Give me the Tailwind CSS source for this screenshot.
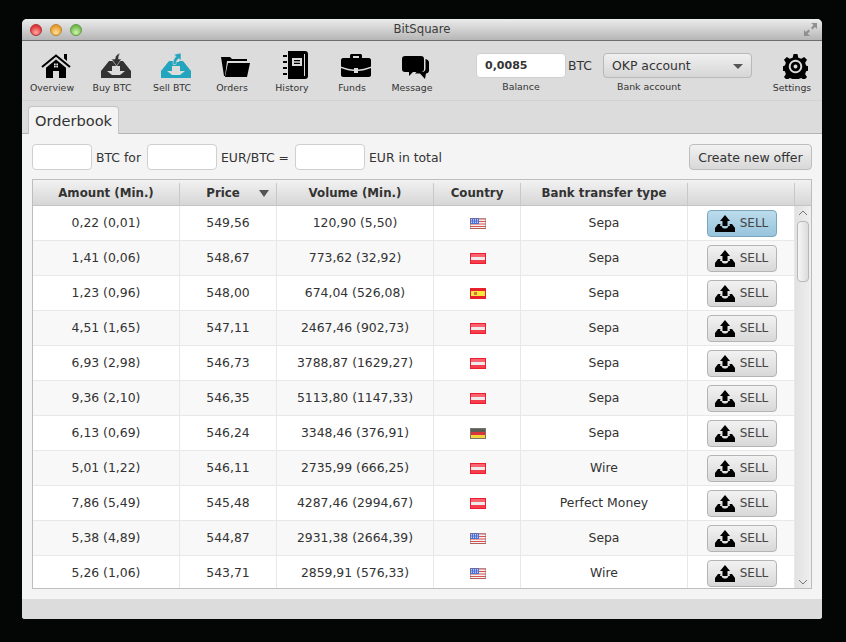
<!DOCTYPE html>
<html lang="en">
<head>
<meta charset="UTF-8">
<title>BitSquare</title>
<script src="https://cdn.jsdelivr.net/npm/@tailwindcss/browser@4"></script>
</head>
<body class="bg-[#040605] h-[642px] overflow-hidden font-['DejaVu_Sans',sans-serif] text-[12.4px] text-[#333]">

<svg class="hidden">
  <symbol id="tray-up" viewBox="0 0 20 17">
    <path d="M10 0l5 6h-2.500v5h-5V6H5z"/>
    <path d="M3 9h2.500L5 11h1.500c.5 2 2 2.500 3.500 2.500s3-.5 3.500-2.500H15l-.5-2H17l3 4v4H0v-4z"/>
  </symbol>
  <symbol id="tray-body" viewBox="0 0 30 25">
    <path fill-rule="evenodd" d="M8 8h4v1h6V8h4l8 10v7H0v-7zM6 18h5v-5h8v5h5l-5 4h-8z"/>
  </symbol>
  <symbol id="flag-us" viewBox="0 0 16 11">
    <rect width="16" height="11" fill="#f4f1f1"/>
    <path d="M0 1h16M0 3.500h16M0 6h16M0 8.500h16M0 10.500h16" stroke="#d9534f" stroke-width="1"/>
    <rect width="9" height="6" fill="#4a6fd8"/>
    <path d="M1 1.500h7M1 3h7M1 4.500h7" stroke="#dfe7fb" stroke-width=".8" stroke-dasharray="1 1"/>
    <rect x=".5" y=".5" width="15" height="10" fill="none" stroke="#8a6a6a" stroke-opacity=".5"/>
  </symbol>
  <symbol id="flag-at" viewBox="0 0 16 11">
    <rect width="16" height="11" fill="#ee1c2e"/>
    <rect x="1" y="1" width="14" height="3" fill="#f9626f"/>
    <rect x="1" y="4" width="14" height="3" fill="#f0ecec"/>
    <rect x="1" y="7" width="14" height="3" fill="#f43e4e"/>
  </symbol>
  <symbol id="flag-es" viewBox="0 0 16 11">
    <rect width="16" height="11" fill="#e8202c"/>
    <rect x="1" y="3" width="14" height="5" fill="#f6e83c"/>
    <rect x="4" y="4" width="3" height="3" fill="#d8703c"/>
  </symbol>
  <symbol id="flag-de" viewBox="0 0 16 11">
    <rect width="16" height="11" fill="#77756a"/>
    <rect x="1" y="1" width="14" height="3" fill="#5c5c58"/>
    <rect x="1" y="4" width="14" height="3" fill="#d8343a"/>
    <rect x="1" y="7" width="14" height="3" fill="#f4d43c"/>
  </symbol>
</svg>

<div class="ml-[22px] mt-[19px] w-[800px] h-[600px] rounded-t-[5px] rounded-b-[3px] overflow-hidden bg-[#dcdcdc] flex flex-col">

  <!-- title bar -->
  <div class="relative h-[22px] shrink-0 flex items-center pl-[8px] gap-[8px] border-b border-[#6e6e6e] bg-gradient-to-b from-[#ececec] to-[#b6b6b6]">
    <span class="w-[12px] h-[12px] rounded-full border border-[#a33] bg-[radial-gradient(circle_at_50%_75%,#ffa8a0,#e0363a_70%)]"></span>
    <span class="w-[12px] h-[12px] rounded-full border border-[#b8862c] bg-[radial-gradient(circle_at_50%_75%,#ffe09a,#e8992e_70%)]"></span>
    <span class="w-[12px] h-[12px] rounded-full border border-[#5f9a45] bg-[radial-gradient(circle_at_50%_75%,#d0f5a8,#72b950_70%)]"></span>
    <span class="flex-1 text-center text-[11.7px] text-[#3a3a3a] pr-[68px]">BitSquare</span>
    <svg class="absolute right-[4px] top-[3px]" width="15" height="15" viewBox="0 0 15 15" fill="#8f8f8f">
      <path d="M8 1h6v6l-2-2-2.500 2.500-1.500-1.500L10.500 3zM7 14H1V8l2 2 2.500-2.500L7 9l-2.500 2.500z"/>
    </svg>
  </div>

  <!-- toolbar -->
  <div class="h-[60px] shrink-0 flex items-start bg-[#dcdcdc] border-b border-[#d2d2d2] text-[9.4px]">
    <div class="w-[60px] flex flex-col items-center">
      <div class="h-[39px] flex items-end">
        <svg class="ml-[7px] mb-[2px] h-[25px] w-[30px]" viewBox="0 0 30 25">
          <path d="M1 14L15 2.500 29 14" fill="none" stroke="#000" stroke-width="2"/>
          <path d="M23 1h3v7l-3-2.500z"/>
          <path fill-rule="evenodd" d="M15 6.500l10 8.300V25h-7v-7h-6v7H5V14.800zM13 10.500v1.700h1.700v-1.700zM15.300 10.500v1.700H17v-1.700zM13 12.800v1.700h1.700v-1.700zM15.300 12.800v1.700H17v-1.700z"/>
        </svg>
      </div>
      <span class="mt-[1px]">Overview</span>
    </div>
    <div class="w-[60px] flex flex-col items-center">
      <div class="h-[39px] flex items-end">
        <svg class="ml-[7px] mb-[2px] h-[25px] w-[30px]" viewBox="0 0 30 25" fill="#333">
          <use href="#tray-body"/>
          <path d="M19 0c-3 1-5 3-5 6H10.500l5 7 5-7H17.500c0-2 .5-4 1.500-6z" stroke="#dcdcdc" stroke-width=".6"/>
        </svg>
      </div>
      <span class="mt-[1px]">Buy BTC</span>
    </div>
    <div class="w-[60px] flex flex-col items-center">
      <div class="h-[39px] flex items-end">
        <svg class="ml-[7px] mb-[2px] h-[25px] w-[30px]" viewBox="0 0 30 25" fill="#22a5bd">
          <use href="#tray-body"/>
          <path d="M20 0l-7 1.500 2 2c-2 2-3 4-3 8h3c0-3 1-5 3-6l2 2z" stroke="#dcdcdc" stroke-width=".6"/>
        </svg>
      </div>
      <span class="mt-[1px]">Sell BTC</span>
    </div>
    <div class="w-[60px] flex flex-col items-center">
      <div class="h-[39px] flex items-end">
        <svg class="ml-[7px] mb-[3px] h-[20px] w-[29px]" viewBox="0 0 29 20">
          <path d="M0 0h9l2 2h15v2H6L4 19H3z"/>
          <path d="M7 6h22l-3 14H4z"/>
        </svg>
      </div>
      <span class="mt-[1px]">Orders</span>
    </div>
    <div class="w-[60px] flex flex-col items-center">
      <div class="h-[39px] flex items-end">
        <svg class="ml-[7px] mb-[1px] h-[28px] w-[25px]" viewBox="0 0 25 28">
          <path fill-rule="evenodd" d="M5 0h17c2 0 3 1 3 3v22c0 2-1 3-3 3H5zM9 7v8h10V7zM11 9h6v1.300h-6zM11 11.700h6V13h-6zM21 3v22h1V3z"/>
          <path d="M0 4h4v2H0zM0 10h4v2H0zM0 16h4v2H0zM0 22h4v2H0z"/>
        </svg>
      </div>
      <span class="mt-[1px]">History</span>
    </div>
    <div class="w-[60px] flex flex-col items-center">
      <div class="h-[39px] flex items-end">
        <svg class="ml-[7px] mb-[3px] h-[23px] w-[30px]" viewBox="0 0 30 23">
          <path fill-rule="evenodd" d="M10 0h10l1 1v3h7c1 0 2 1 2 2v6.500c-5 2-10 3-13 3V14h-4v1.500c-3 0-8-1-13-3V6c0-1 1-2 2-2h7V1zM12 2v2h6V2z"/>
          <path d="M0 14c5 2 9 3 13 3v2h4v-2c4 0 8-1 13-3v7c0 1-1 2-2 2H2c-1 0-2-1-2-2z"/>
        </svg>
      </div>
      <span class="mt-[1px]">Funds</span>
    </div>
    <div class="w-[60px] flex flex-col items-center">
      <div class="h-[39px] flex items-end">
        <svg class="ml-[7px] mb-[1px] h-[23px] w-[27px]" viewBox="0 0 27 23">
          <path d="M3 0h16c2 0 3 1 3 3v10c0 2-1 3-3 3h-8l-4 4v-4H3c-2 0-3-1-3-3V3c0-2 1-3 3-3z"/>
          <path d="M23.500 3c2 .5 3.500 1.500 3.500 3.500v8c0 2-1.500 3-3 3l-1 5.500-5-5.500h-5l1.500-1.500H20c2.500 0 3.500-1.500 3.500-3.500z"/>
        </svg>
      </div>
      <span class="mt-[1px]">Message</span>
    </div>

    <div class="ml-[34px] w-[116px] flex flex-col pt-[12px]">
      <div class="flex items-center gap-[2px]">
        <div class="w-[90px] h-[25px] bg-white rounded-[4px] border border-[#d0d0d0] pl-[8px] pt-[1px] flex items-center font-bold text-[11px] text-[#333]">0,0085</div>
        <span class="text-[12.4px] pt-[2px]">BTC</span>
      </div>
      <span class="mt-[2px] w-[90px] text-center">Balance</span>
    </div>
    <div class="ml-[11px] w-[149px] flex flex-col pt-[12px]">
      <div class="h-[25px] rounded-[4px] border border-[#b8b8b8] bg-gradient-to-b from-[#f0f0f0] to-[#d6d6d6] pl-[8px] pr-[8px] pt-[2px] flex items-center justify-between text-[12.4px]">
        <span>OKP account</span>
        <span class="w-0 h-0 border-l-[5px] border-r-[5px] border-t-[5px] border-l-transparent border-r-transparent border-t-[#555]"></span>
      </div>
      <span class="mt-[2px] pl-[14px]">Bank account</span>
    </div>
    <div class="ml-[10px] w-[60px] flex flex-col items-center">
      <div class="h-[39px] flex items-end">
        <svg class="ml-[7px] mb-[1px] h-[25px] w-[25px]" viewBox="0 0 26 26">
          <path fill-rule="evenodd" d="M11 0h4l1 4 3 1 3-2 3 3-2 3 1 3 3 1v4l-3 1-1 3 2 3-3 3-3-2-3 1-1 3h-4l-1-3-3-1-3 2-3-3 2-3-1-3-3-1v-4l3-1 1-3-2-3 3-3 3 2 3-1zM13 6a7 7 0 1 0 .01 0zM13 8a5 5 0 1 1-.01 0zM13 11a2 2 0 1 0 .01 0z"/>
        </svg>
      </div>
      <span class="mt-[1px]">Settings</span>
    </div>
  </div>

  <!-- tab strip -->
  <div class="h-[33px] shrink-0 pl-[6px] pt-[6px] flex items-end bg-[#dcdcdc] border-b border-[#b4b4b4]">
    <div class="w-[91px] h-[28px] -mb-[1px] bg-[#f4f4f4] border border-b-0 border-[#c4c4c4] rounded-t-[4px] flex items-center justify-center text-[14.6px] text-[#333]">Orderbook</div>
  </div>

  <!-- content -->
  <div class="flex-1 bg-[#f4f4f4] px-[10px] pt-[10px] flex flex-col min-h-0">
    <div class="h-[26px] flex items-center">
      <div class="w-[60px] h-[26px] bg-white rounded-[4px] border border-[#cfcfcf]"></div>
      <span class="ml-[4px] w-[51px] pt-[2px]">BTC for</span>
      <div class="w-[70px] h-[26px] bg-white rounded-[4px] border border-[#cfcfcf]"></div>
      <span class="ml-[4px] w-[74px] pt-[2px]">EUR/BTC =</span>
      <div class="w-[70px] h-[26px] bg-white rounded-[4px] border border-[#cfcfcf]"></div>
      <span class="ml-[4px] pt-[2px]">EUR in total</span>
      <div class="ml-auto w-[123px] h-[26px] pt-[2px] rounded-[4px] border border-[#bdbdbd] bg-gradient-to-b from-[#f2f2f2] to-[#d8d8d8] flex items-center justify-center text-[12.5px]">Create new offer</div>
    </div>

    <div class="mt-[9px] h-[410px] shrink-0 border border-[#bdbdbd] bg-white flex overflow-hidden">
      <div class="w-[762px] shrink-0">
        <div class="h-[26px] pt-[3px] grid grid-cols-[147px_97px_157px_87px_167px_107px] border-b border-[#c4c4c4] bg-gradient-to-b from-[#f2f2f2] to-[#d6d6d6] font-bold text-[11.8px] text-[#333] text-center">
          <div class="flex items-center justify-center border-r border-[#c8c8c8]">Amount (Min.)</div>
          <div class="relative flex items-center justify-center border-r border-[#c8c8c8] pr-[10px]">Price
            <span class="absolute right-[7px] top-[7px] w-0 h-0 border-l-[5px] border-r-[5px] border-t-[7px] border-l-transparent border-r-transparent border-t-[#555]"></span>
          </div>
          <div class="flex items-center justify-center border-r border-[#c8c8c8]">Volume (Min.)</div>
          <div class="flex items-center justify-center border-r border-[#c8c8c8]">Country</div>
          <div class="flex items-center justify-center border-r border-[#c8c8c8]">Bank transfer type</div>
          <div class="border-r border-[#c8c8c8]"></div>
        </div>
        <div id="rows"></div>
      </div>
      <div class="flex-1 flex flex-col">
        <div class="h-[26px] shrink-0 border-b border-[#c4c4c4] bg-gradient-to-b from-[#f2f2f2] to-[#d6d6d6]"></div>
        <div class="flex-1 relative bg-[#e6e6e6] bg-gradient-to-r from-[#e2e2e2] to-[#efefef]">
          <svg class="absolute left-[3px] top-[4px]" width="10" height="6" viewBox="0 0 10 6" fill="none" stroke="#777"><path d="M1 5l4-4 4 4"/></svg>
          <div class="absolute left-[2px] top-[15px] w-[12px] h-[61px] rounded-[4px] border border-[#b8b8b8] bg-gradient-to-r from-[#f6f6f6] to-[#dcdcdc]"></div>
          <svg class="absolute left-[3px] bottom-[3px]" width="10" height="6" viewBox="0 0 10 6" fill="none" stroke="#777"><path d="M1 1l4 4 4-4"/></svg>
        </div>
      </div>
    </div>
  </div>

  <!-- status bar -->
  <div class="h-[20px] shrink-0 bg-[#dcdcdc]"></div>
</div>

<script>
  const offers = [
    ['0,22 (0,01)', '549,56', '120,90 (5,50)', 'us', 'Sepa'],
    ['1,41 (0,06)', '548,67', '773,62 (32,92)', 'at', 'Sepa'],
    ['1,23 (0,96)', '548,00', '674,04 (526,08)', 'es', 'Sepa'],
    ['4,51 (1,65)', '547,11', '2467,46 (902,73)', 'at', 'Sepa'],
    ['6,93 (2,98)', '546,73', '3788,87 (1629,27)', 'at', 'Sepa'],
    ['9,36 (2,10)', '546,35', '5113,80 (1147,33)', 'at', 'Sepa'],
    ['6,13 (0,69)', '546,24', '3348,46 (376,91)', 'de', 'Sepa'],
    ['5,01 (1,22)', '546,11', '2735,99 (666,25)', 'at', 'Wire'],
    ['7,86 (5,49)', '545,48', '4287,46 (2994,67)', 'at', 'Perfect Money'],
    ['5,38 (4,89)', '544,87', '2931,38 (2664,39)', 'us', 'Sepa'],
    ['5,26 (1,06)', '543,71', '2859,91 (576,33)', 'us', 'Wire']
  ];
  const cell = 'flex items-center justify-center border-r border-[#e8e8e8]';
  document.getElementById('rows').innerHTML = offers.map((o, i) => {
    const rowBg = i % 2 ? 'bg-[#f8f8f8]' : 'bg-white';
    const btn = i === 0
      ? 'border-[#7ba4bd] from-[#bcdcec] to-[#97c4dc]'
      : 'border-[#b4b4b4] from-[#f2f2f2] to-[#d8d8d8]';
    return `<div class="h-[35px] grid grid-cols-[147px_97px_157px_87px_167px_107px] border-b border-[#e8e8e8] ${rowBg}">
      <div class="${cell}">${o[0]}</div>
      <div class="${cell}">${o[1]}</div>
      <div class="${cell}">${o[2]}</div>
      <div class="${cell} pl-[1px]"><svg width="16" height="11"><use href="#flag-${o[3]}"/></svg></div>
      <div class="${cell}">${o[4]}</div>
      <div class="${cell} pl-[1px]">
        <div class="w-[70px] h-[27px] rounded-[4px] border bg-gradient-to-b ${btn} flex items-center justify-center gap-[5px] text-[12px] text-[#444]">
          <svg class="text-black" width="20" height="17"><use href="#tray-up"/></svg>SELL
        </div>
      </div>
    </div>`;
  }).join('');
</script>
</body>
</html>
